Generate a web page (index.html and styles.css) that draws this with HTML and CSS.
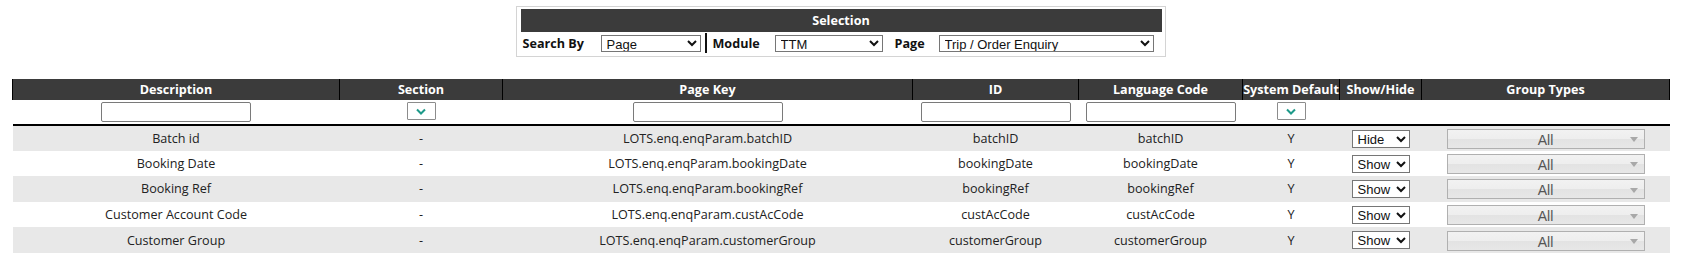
FILE: index.html
```html
<!DOCTYPE html>
<html lang="en">
<head>
    <meta charset="UTF-8">
    <title>Language Setup</title>
    <link rel="stylesheet" href="styles.css">
</head>
<body>
<div class="page">

    <div class="selection">
        <div class="selection-title">Selection</div>
        <div class="selection-row">
            <label class="sel-label search-label">Search By</label>
            <select class="sel sel-search"><option>Page</option></select>
            <span class="sel-divider"></span>
            <label class="sel-label module-label">Module</label>
            <select class="sel sel-module"><option>TTM</option></select>
            <label class="sel-label page-label">Page</label>
            <select class="sel sel-page"><option>Trip / Order Enquiry</option></select>
        </div>
    </div>

    <table class="grid">
        <colgroup>
            <col style="width:327px">
            <col style="width:163px">
            <col style="width:410px">
            <col style="width:166px">
            <col style="width:164px">
            <col style="width:97px">
            <col style="width:82px">
            <col style="width:248px">
        </colgroup>
        <thead>
            <tr class="head-row">
                <th>Description</th>
                <th>Section</th>
                <th>Page Key</th>
                <th>ID</th>
                <th>Language Code</th>
                <th>System Default</th>
                <th>Show/Hide</th>
                <th>Group Types</th>
            </tr>
            <tr class="filter-row">
                <td><input type="text" class="filter-input"></td>
                <td><span class="filter-select"><svg width="10" height="7" viewBox="0 0 10 7"><path d="M1 1.5 L5 5.5 L9 1.5" fill="none" stroke="#1e9a8a" stroke-width="2"/></svg></span></td>
                <td><input type="text" class="filter-input"></td>
                <td><input type="text" class="filter-input"></td>
                <td><input type="text" class="filter-input"></td>
                <td><span class="filter-select"><svg width="10" height="7" viewBox="0 0 10 7"><path d="M1 1.5 L5 5.5 L9 1.5" fill="none" stroke="#1e9a8a" stroke-width="2"/></svg></span></td>
                <td></td>
                <td></td>
            </tr>
        </thead>
        <tbody id="rows"></tbody>
    </table>

</div>

<script>
    const rows = [
        ['Batch id', 'LOTS.enq.enqParam.batchID', 'batchID', 'Hide'],
        ['Booking Date', 'LOTS.enq.enqParam.bookingDate', 'bookingDate', 'Show'],
        ['Booking Ref', 'LOTS.enq.enqParam.bookingRef', 'bookingRef', 'Show'],
        ['Customer Account Code', 'LOTS.enq.enqParam.custAcCode', 'custAcCode', 'Show'],
        ['Customer Group', 'LOTS.enq.enqParam.customerGroup', 'customerGroup', 'Show']
    ];

    const body = document.getElementById('rows');
    rows.forEach(r => {
        const tr = document.createElement('tr');
        tr.innerHTML =
            '<td>' + r[0] + '</td>' +
            '<td>-</td>' +
            '<td>' + r[1] + '</td>' +
            '<td>' + r[2] + '</td>' +
            '<td>' + r[2] + '</td>' +
            '<td>Y</td>' +
            '<td><select class="sel sel-show"><option>Hide</option><option>Show</option></select></td>' +
            '<td><span class="multi"><span class="multi-text">All</span><span class="multi-arrow"></span></span></td>';
        tr.querySelector('.sel-show').value = r[3];
        body.appendChild(tr);
    });
</script>
</body>
</html>
```

FILE: styles.css
```css
:root {
    --head-bg: #3b3b3b;
    --row-alt: #e8e8e8;
    --text-color: #222;
}

* {
    box-sizing: border-box;
}

body {
    margin: 0;
    font-family: 'Open Sans', sans-serif;
    font-size: 12.6px;
    color: var(--text-color);
    background: white;
}

.page {
    width: 1657px;
    margin-left: 12px;
    padding-top: 6px;
}

/* selection panel */

.selection {
    width: 650px;
    margin: 0 auto 22px;
    border: 1px solid #d4d4d4;
    padding: 2px 3px 2px 4px;
}

.selection-title {
    height: 23px;
    line-height: 23px;
    background: var(--head-bg);
    color: white;
    font-weight: 700;
    text-align: center;
}

.selection-row {
    display: flex;
    align-items: center;
    height: 22px;
    padding-left: 2px;
}

.sel-label {
    font-weight: 700;
    color: #111;
}

.search-label {
    width: 78px;
}

.module-label {
    width: 62px;
    margin-left: 6px;
}

.page-label {
    width: 44px;
    margin-left: 12px;
}

.sel-divider {
    width: 2px;
    height: 20px;
    background: #111;
    margin-left: 4px;
}

.sel {
    font-family: 'Liberation Sans', Arial, sans-serif;
    font-size: 13px;
    color: #111;
    height: 17px;
    padding: 0 1px;
    border: 1px solid #767676;
    border-radius: 0;
    background: white;
}

.sel-search {
    width: 100px;
}

.sel-module {
    width: 108px;
}

.sel-page {
    width: 215px;
}

/* grid */

.grid {
    width: 1657px;
    border-collapse: collapse;
    table-layout: fixed;
}

.grid td {
    text-align: center;
    height: 25.6px;
    padding: 0;
    white-space: nowrap;
}

.head-row th {
    height: 21px;
    padding: 0;
    background: var(--head-bg);
    color: white;
    font-weight: 700;
    border-left: 1px solid #000;
    border-right: 1px solid #000;
    white-space: nowrap;
}

.filter-row td {
    height: 25px;
    border-bottom: 2px solid #000;
    vertical-align: top;
    padding-top: 2px;
}

.filter-input {
    width: 150px;
    height: 20px;
    border: 1px solid #7a7a7a;
    border-radius: 2px;
    padding: 0 3px;
    font-family: 'Open Sans', sans-serif;
    font-size: 12px;
}

.filter-select {
    display: inline-flex;
    align-items: center;
    justify-content: center;
    width: 29px;
    height: 18px;
    border: 1px solid #8c8c8c;
    border-radius: 1px;
    background: white;
    vertical-align: top;
}

tbody td {
    padding-top: 1px;
}

tbody tr:nth-child(odd) {
    background: var(--row-alt);
}

.sel-show {
    width: 58px;
    height: 18px;
    vertical-align: middle;
}

.multi {
    display: inline-flex;
    align-items: center;
    width: 198px;
    height: 20px;
    margin-top: 1px;
    border: 1px solid #b0b0b0;
    background: linear-gradient(to bottom, #f2f2f2 0%, #eeeeee 48%, #e3e3e3 52%, #e7e7e7 100%);
    vertical-align: middle;
}

.multi-text {
    flex: 1;
    padding-left: 14px;
    padding-top: 2px;
    font-family: 'Liberation Sans', Arial, sans-serif;
    font-size: 14px;
    color: #555;
    text-align: center;
}

.multi-arrow {
    width: 0;
    height: 0;
    margin-right: 6px;
    margin-top: 2px;
    border-left: 4px solid transparent;
    border-right: 4px solid transparent;
    border-top: 5px solid #a8a8a8;
}
```
